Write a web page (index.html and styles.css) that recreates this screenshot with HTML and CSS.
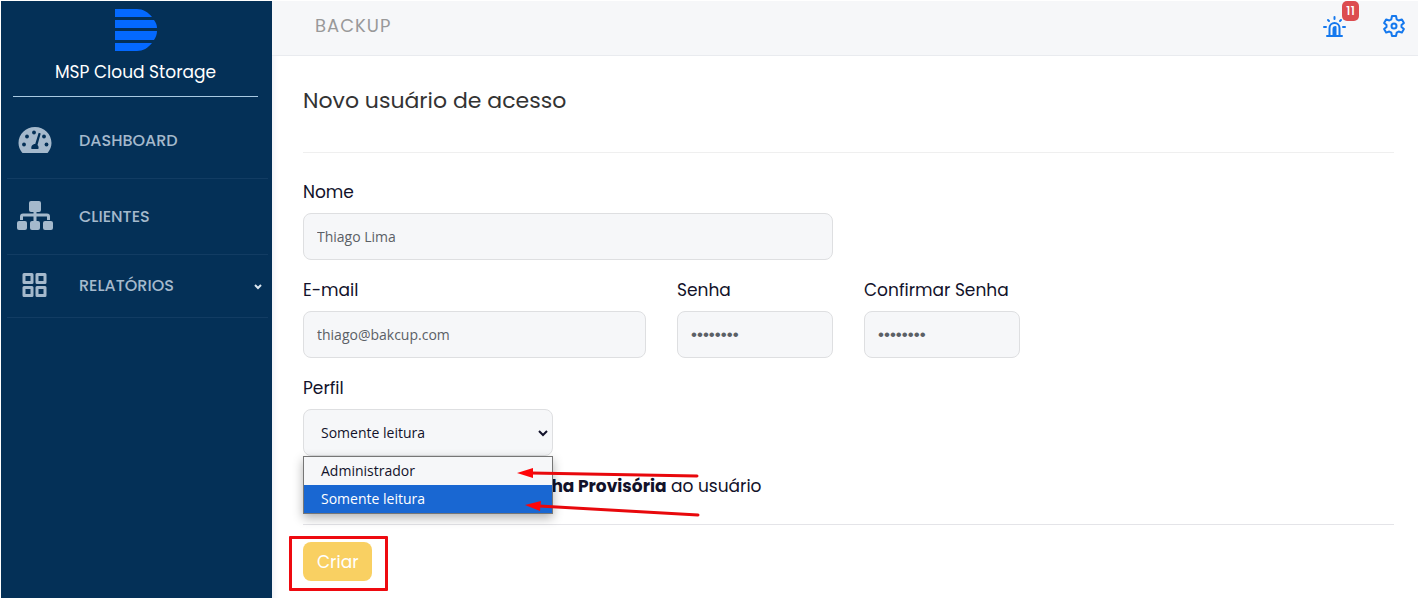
FILE: index.html
```html
<!DOCTYPE html>
<html lang="pt-BR">
<head>
<meta charset="utf-8">
<meta name="viewport" content="width=device-width, initial-scale=1">
<title>MSP Cloud Storage</title>
<link rel="stylesheet" href="styles.css">
</head>
<body>
<div class="app">
  <aside class="sidebar">
    <div class="brand">
      <svg class="brand-logo" viewBox="0 0 42 42" aria-hidden="true">
        <path d="M0 0h22c6 0 11 3 15 8H0zM0 11h39c2 3 3 5 3 8H0zM0 22h42c0 3-1 6-3 9H0zM0 34h37c-4 5-9 8-15 8H0z"/>
      </svg>
      <span class="brand-name">MSP Cloud Storage</span>
    </div>
    <nav class="menu">
      <a class="menu-item" href="#dashboard">
        <svg class="menu-icon" viewBox="0 0 36 36" aria-hidden="true">
          <path fill="currentColor" d="M5 30.500C2.800 27.500 1.500 24.500 1.500 21 1.500 12 8.800 5 18 5s16.500 7 16.500 16c0 3.500-1.300 6.500-3.500 9.500-.3.500-.8.500-1.300.500H6.300c-.5 0-1 0-1.300-.5z"/>
          <g fill="#043057"><circle cx="7" cy="22.500" r="1.900"/><circle cx="10" cy="14.500" r="1.900"/><circle cx="17" cy="10.500" r="1.900"/><circle cx="27" cy="14.500" r="1.900"/><circle cx="29.500" cy="22.500" r="1.900"/><path d="M21.700 10.800l2 .6-3.200 11.500c1.300 1.300 1.300 2.600.8 4.100h-6.800c-.7-2.600.8-5 3.700-5z"/></g>
        </svg>
        <span>DASHBOARD</span>
      </a>
      <a class="menu-item" href="#clientes">
        <svg class="menu-icon" viewBox="0 0 36 36" aria-hidden="true">
          <g fill="currentColor"><rect x="12" y="3" width="12" height="11" rx="2"/><rect x="0" y="23" width="10" height="9" rx="2"/><rect x="13" y="23" width="10" height="9" rx="2"/><rect x="26" y="23" width="10" height="9" rx="2"/></g>
          <path fill="none" stroke="currentColor" stroke-width="3" d="M18 13v10M4.500 22v-3.500q0-1.500 1.500-1.500h24q1.500 0 1.500 1.500V22"/>
        </svg>
        <span>CLIENTES</span>
      </a>
      <a class="menu-item menu-item-short" href="#relatorios">
        <svg class="menu-icon" viewBox="0 0 36 36" aria-hidden="true">
          <path fill="none" stroke="currentColor" stroke-width="3" stroke-linejoin="round" d="M7 7.500h8v8h-8zM20 7.500h8v8h-8zM7 20.500h8v8h-8zM20 20.500h8v8h-8z"/>
        </svg>
        <span>RELATÓRIOS</span>
        <svg class="menu-chevron" viewBox="0 0 8 8" aria-hidden="true"><path d="M1 3l3 3 3-3"/></svg>
      </a>
    </nav>
  </aside>

  <div class="page">
    <header class="topbar">
      <span class="topbar-title">BACKUP</span>
      <div class="topbar-actions">
        <button class="icon-button" type="button" aria-label="Alertas">
          <svg viewBox="0 0 24 24" aria-hidden="true"><path d="M5 22h15M7.500 21v-7a5 5 0 0 1 10 0v7M11.500 21v-6q0-2 2-2v8M12.500 3v2M6 6l1 1M19 6l-1 1M2 13h2M21 13h2"/></svg>
          <span class="badge">11</span>
        </button>
        <button class="icon-button" type="button" aria-label="Configurações">
          <svg viewBox="0 0 24 24" aria-hidden="true"><path d="M10 2h4l.7 3.300 2 1.200 3.200-1.100 2 3.500L19.500 11v2l2.400 2.100-2 3.500-3.200-1.100-2 1.200L14 22h-4l-.7-3.300-2-1.200-3.200 1.100-2-3.500L4.500 13v-2L2.100 8.900l2-3.500 3.200 1.100 2-1.200z"/><circle cx="12" cy="12" r="2.500"/></svg>
        </button>
      </div>
    </header>

    <main class="content">
      <h1 class="title">Novo usuário de acesso</h1>
      <form class="form">
        <div class="fields">
          <div class="field span-6">
            <label for="nome">Nome</label>
            <input id="nome" type="text" value="Thiago Lima">
          </div>
          <div class="field span-4 row-start">
            <label for="email">E-mail</label>
            <input id="email" type="email" value="thiago@bakcup.com">
          </div>
          <div class="field span-2">
            <label for="senha">Senha</label>
            <input id="senha" type="password" value="12345678">
          </div>
          <div class="field span-2">
            <label for="confirmar">Confirmar Senha</label>
            <input id="confirmar" type="password" value="12345678">
          </div>
          <div class="field span-3 row-start">
            <label for="perfil">Perfil</label>
            <div class="select-wrap">
              <select id="perfil">
                <option>Administrador</option>
                <option selected>Somente leitura</option>
              </select>
              <svg class="select-chevron" viewBox="0 0 12 8" aria-hidden="true"><path d="M2 2l4 4 4-4"/></svg>
              <ul class="options" role="listbox" aria-label="Perfil">
                <li role="option" aria-selected="false">Administrador</li>
                <li class="active" role="option" aria-selected="true">Somente leitura</li>
              </ul>
              <svg class="arrows" viewBox="0 0 184 56" aria-hidden="true">
                <path class="arrow-line" d="M14 9L180 12M22 42L181 51"/>
                <path class="arrow-head" d="M0 9l16-5v10zM8 41l16-4-1 10z"/>
              </svg>
            </div>
          </div>
        </div>
        <p class="notice"><b>Senha Provisória</b> ao usuário</p>
        <div class="actions">
          <div class="highlight"><button class="submit" type="submit">Criar</button></div>
        </div>
      </form>
    </main>
  </div>
</div>
</body>
</html>
```
FILE: styles.css
```css
* {
  box-sizing: border-box;
}

body {
  margin: 0;
  padding: 1px 8px 0 1px;
  background: #fff;
  color: #12122a;
  font-family: Poppins, Inter, sans-serif;
  font-feature-settings: "cv11";
  font-size: 17px;
  line-height: 24px;
}

.app {
  display: flex;
  min-height: calc(100vh - 1px);
}

.sidebar {
  flex: 0 0 271px;
  background: #043057;
  color: #a5b9cc;
}

.brand {
  display: flex;
  flex-direction: column;
  align-items: center;
  gap: 9px;
  margin: 0 14px 0 12px;
  padding: 8px 0 12px;
  border-bottom: 1px solid #a9c9e2;
  color: #fff;
}

.brand-logo {
  width: 42px;
  height: 42px;
  fill: #0469ff;
}

.brand-name {
  font-size: 17px;
}

.menu {
  padding: 6px 4px 0 6px;
}

.menu-item {
  display: flex;
  align-items: center;
  gap: 26px;
  height: 76px;
  padding: 0 6px 0 10px;
  border-bottom: 1px solid #123c63;
  color: inherit;
  font-size: 16px;
  font-weight: 500;
  text-decoration: none;
}

.menu-item-short {
  height: 63px;
}

.menu-icon {
  width: 36px;
  height: 36px;
  margin-bottom: 2px;
}

.menu-chevron {
  width: 8px;
  height: 8px;
  margin-left: auto;
  fill: none;
  stroke: #dce6ef;
  stroke-width: 2;
}

.page {
  flex: 1;
  min-width: 0;
  box-shadow: inset 7px 0 7px -6px #e9ebf2;
}

.topbar {
  display: flex;
  align-items: center;
  justify-content: space-between;
  height: 55px;
  padding: 0 11px 5px 43px;
  border-bottom: 1px solid #e9ebef;
  background: #f6f7f9;
}

.topbar-title {
  color: #999;
  font-size: 18px;
  letter-spacing: 1px;
}

.topbar-actions {
  display: flex;
  gap: 34px;
}

.icon-button {
  position: relative;
  width: 26px;
  height: 26px;
  padding: 1px;
  border: 0;
  background: none;
  font: inherit;
}

.icon-button svg {
  display: block;
  width: 24px;
  height: 24px;
  fill: none;
  stroke: #1478ee;
  stroke-width: 2;
  stroke-linecap: round;
  stroke-linejoin: round;
}

.badge {
  position: absolute;
  top: -12px;
  left: 21px;
  width: 17px;
  border-radius: 5px;
  background: #dc4c50;
  color: #fff;
  font-size: 13px;
  font-weight: 500;
  line-height: 20px;
  text-align: center;
}

.content {
  padding: 29px 24px 8px 31px;
}

.title {
  margin: 0 0 27px;
  padding-bottom: 35px;
  border-bottom: 1px solid #efefef;
  color: #333;
  font-size: 22px;
  font-weight: 400;
  line-height: 32px;
}

.fields {
  display: grid;
  grid-template-columns: repeat(12, 1fr);
  gap: 18px 31px;
}

.span-2 { grid-column-end: span 2; }
.span-3 { grid-column-end: span 3; }
.span-4 { grid-column-end: span 4; }
.span-6 { grid-column-end: span 6; }
.row-start { grid-column-start: 1; }

.field {
  display: flex;
  flex-direction: column;
  gap: 9px;
  min-width: 0;
}

.field label {
  white-space: nowrap;
}

.field input,
.field select {
  width: 100%;
  height: 47px;
  padding: 0 13px;
  border: 1px solid #dedfe1;
  border-radius: 8px;
  outline: 0;
  background: #f6f7f9;
  color: #5b6066;
  font-family: "Segoe UI", "Open Sans", sans-serif;
  font-size: 14px;
}

.field input[type="password"] {
  font-family: "Segoe UI", "Liberation Sans", sans-serif;
  font-size: 17px;
}

.field select {
  padding: 0 17px;
  color: #12122a;
  appearance: none;
}

.select-wrap {
  position: relative;
}

.select-chevron {
  position: absolute;
  top: 20px;
  right: 4px;
  width: 12px;
  height: 8px;
  fill: none;
  stroke: #12122a;
  stroke-width: 2;
  pointer-events: none;
}

.options {
  position: absolute;
  z-index: 1;
  top: 47px;
  left: 0;
  right: 0;
  margin: 0;
  padding: 0;
  border: 1px solid #767676;
  background: #f6f7f9;
  box-shadow: 0 4px 10px rgba(0, 0, 0, 0.3);
  font-family: "Segoe UI", "Open Sans", sans-serif;
  font-size: 14px;
  line-height: 28px;
  list-style: none;
}

.options li {
  padding: 0 17px;
}

.options .active {
  background: #1967d2;
  color: #fff;
}

.arrows {
  position: absolute;
  z-index: 2;
  top: 55px;
  left: 214px;
  width: 184px;
  height: 56px;
}

.arrow-line {
  fill: none;
  stroke: #e8080c;
  stroke-width: 3;
  stroke-linecap: round;
}

.arrow-head {
  fill: #ff0509;
}

.notice {
  margin: 0;
  padding: 18px 0 26px 216px;
  border-bottom: 1px solid #e4e4e8;
}

.actions {
  display: flex;
  padding-top: 17px;
}

.highlight {
  position: relative;
}

.highlight::after {
  content: "";
  position: absolute;
  inset: -6px -16px -10px -14px;
  border: 3px solid #ee0a10;
  border-radius: 1px;
  pointer-events: none;
}

.submit {
  display: block;
  height: 39px;
  padding: 0 14px;
  border: 0;
  border-radius: 8px;
  background: #f9d062;
  color: #fff;
  font: inherit;
}
```
